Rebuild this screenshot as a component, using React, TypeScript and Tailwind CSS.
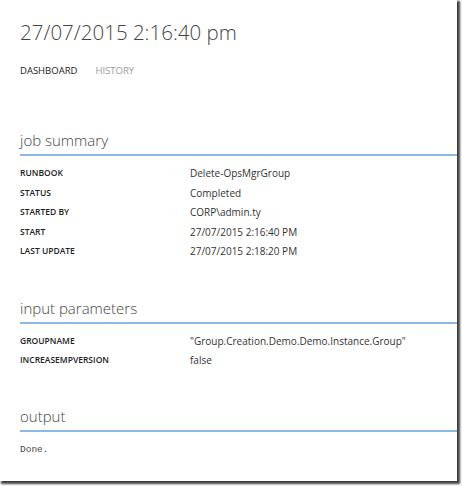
const summary = [
  ['RUNBOOK', 'Delete-OpsMgrGroup'],
  ['STATUS', 'Completed'],
  ['STARTED BY', 'CORP\\admin.ty'],
  ['START', '27/07/2015 2:16:40 PM'],
  ['LAST UPDATE', '27/07/2015 2:18:20 PM'],
];

const params = [
  ['GROUPNAME', '"Group.Creation.Demo.Demo.Instance.Group"'],
  ['INCREASEMPVERSION', 'false'],
];

function Section({ title }: { title: string }) {
  return (
    <div className="border-b-2 border-[#8bb9e4] pb-[3px]">
      <h2 className="text-[15px] font-light leading-[22px] text-[#444]">{title}</h2>
    </div>
  );
}

function Rows({ rows }: { rows: string[][] }) {
  return (
    <div className="pt-[8px]">
      {rows.map(([k, v]) => (
        <div key={k} className="flex h-[19.5px] items-center">
          <div className="w-[170px] text-[8.5px] font-semibold text-[#222]">{k}</div>
          <div className="text-[10px] text-[#333]">{v}</div>
        </div>
      ))}
    </div>
  );
}

export default function App() {
  return (
    <div className="bg-white w-[462px] h-[486px]" style={{ fontFamily: '"Open Sans", "Liberation Sans", sans-serif' }}>
      <div className="w-[457px] h-[481px] bg-white pl-[20px] shadow-[2px_2px_2px_1px_rgba(0,0,0,0.75)]">
        <h1 className="pt-[18px] text-[20.5px] font-light leading-[28px] text-[#444]">27/07/2015 2:16:40 pm</h1>
        <div className="mt-[18px] flex gap-[18px] text-[9.5px] leading-[14px]">
          <span className="text-[#222]">DASHBOARD</span>
          <span className="text-[#999]">HISTORY</span>
        </div>

        <div className="mt-[51px]">
          <Section title="job summary" />
          <Rows rows={summary} />
        </div>

        <div className="mt-[35px]">
          <Section title="input parameters" />
          <Rows rows={params} />
        </div>

        <div className="mt-[34px]">
          <Section title="output" />
          <div className="pt-[11px] text-[9.5px] leading-[14px] text-[#444]" style={{ fontFamily: '"Liberation Mono", monospace' }}>
            Done.
          </div>
        </div>
      </div>
    </div>
  );
}
